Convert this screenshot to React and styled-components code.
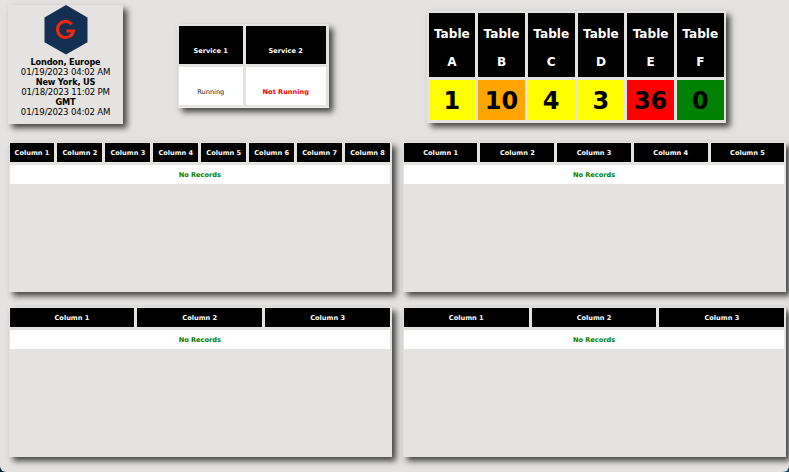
import React from "react";
import styled, { createGlobalStyle } from "styled-components";

const GlobalStyle = createGlobalStyle`
  * { box-sizing: border-box; }
  body {
    margin: 0;
    background: linear-gradient(90deg, #06202e 50%, #0b4a74 50%);
    font-family: Verdana, "DejaVu Sans", sans-serif;
    color: #000;
  }
`;

const Page = styled.main`
  width: 789px;
  height: 472px;
  overflow: hidden;
  background: #e4e3e1;
  border-radius: 0 0 6px 6px;
`;

const Panel = styled.section`
  background: #e4e3e1;
  box-shadow: 4px 4px 6px #444;
`;

const TopBar = styled.header`
  display: flex;
  align-items: flex-start;
  height: 142px;
  padding-left: 8px;
`;

const Clocks = styled(Panel)`
  width: 115px;
  height: 119px;
  margin-top: 5px;
  display: flex;
  flex-direction: column;
  align-items: center;
  font-size: 8.6px;
  line-height: 10px;
  white-space: nowrap;
`;

const Logo = styled.svg`
  width: 44px;
  height: 50px;
  margin-bottom: 2px;
`;

const City = styled.strong`
  font-size: 8.2px;
  letter-spacing: -0.18px;
`;

const Time = styled.span`
  letter-spacing: -0.2px;
`;

const Services = styled(Panel)`
  width: 151px;
  height: 84px;
  margin: 24px 0 0 54.5px;
  padding: 2px 2px 2px 1.5px;
  display: grid;
  grid-template-columns: 63.5px 80.5px;
  grid-template-rows: 38px 37.5px;
  gap: 3px;
  border-bottom: 1px solid #f3f3f2;
`;

const ServiceCell = styled.div`
  display: flex;
  align-items: center;
  justify-content: center;
  padding-top: 12px;
  font-size: 6.6px;
  font-weight: ${(p) => (p.$bold ? 700 : 400)};
  background: ${(p) => (p.$head ? "#000" : "#fff")};
  color: ${(p) => p.$color};
`;

const Counters = styled(Panel)`
  width: 299px;
  height: 112px;
  margin: 11px 0 0 98.5px;
  padding: 1.5px;
  display: grid;
  grid-template-columns: repeat(6, 46.7px);
  grid-template-rows: 64.5px 40px;
  gap: 3px;
`;

const CounterHead = styled.div`
  background: #000;
  color: #fff;
  display: flex;
  flex-direction: column;
  align-items: center;
  justify-content: center;
  padding-top: 8px;
  font-size: 12.1px;
  font-weight: 700;
  line-height: 27.4px;
`;

const CounterValue = styled.div`
  background: ${(p) => p.$fill};
  display: flex;
  align-items: center;
  justify-content: center;
  padding-top: 2px;
  font-size: 24px;
  font-weight: 700;
`;

const Grids = styled.div`
  display: grid;
  grid-template-columns: 383px 383px;
  grid-template-rows: 150px 149.4px;
  gap: 15.4px 11.3px;
  padding-left: 8.5px;
`;

const GridPanel = styled(Panel)`
  padding: 1px 1.5px 0 1px;
`;

const HeadRow = styled.div`
  display: grid;
  grid-template-columns: repeat(${(p) => p.$count}, 1fr);
  gap: 3px;
  height: 19px;
`;

const HeadCell = styled.div`
  height: 19px;
  background: #000;
  color: #fff;
  font-size: 6.6px;
  font-weight: 700;
  line-height: 21px;
  text-align: center;
  white-space: nowrap;
`;

const EmptyRow = styled.div`
  margin-top: 3px;
  height: 19px;
  background: #fff;
  color: green;
  font-size: 6.6px;
  font-weight: 700;
  line-height: 21px;
  text-align: center;
`;

const clocks = [
  ["London, Europe", "01/19/2023 04:02 AM"],
  ["New York, US", "01/18/2023 11:02 PM"],
  ["GMT", "01/19/2023 04:02 AM"],
];

const counters = [
  ["A", 1, "yellow"],
  ["B", 10, "orange"],
  ["C", 4, "yellow"],
  ["D", 3, "yellow"],
  ["E", 36, "red"],
  ["F", 0, "green"],
];

function RecordGrid({ count }) {
  return (
    <GridPanel>
      <HeadRow $count={count}>
        {Array.from({ length: count }, (_, i) => (
          <HeadCell key={i}>Column {i + 1}</HeadCell>
        ))}
      </HeadRow>
      <EmptyRow>No Records</EmptyRow>
    </GridPanel>
  );
}

export default function App() {
  return (
    <>
      <GlobalStyle />
      <Page>
        <TopBar>
          <Clocks>
            <Logo viewBox="0 0 44 50">
              <path d="M22 0 43.5 12.4V37.2L22 49.6.5 37.2V12.4Z" fill="#152f52" />
              <path
                d="M27.6 19.2A8 8 0 1 0 29.4 25.9H22.4"
                fill="none"
                stroke="#f4270c"
                strokeWidth="3"
              />
            </Logo>
            {clocks.map(([city, time]) => (
              <React.Fragment key={city}>
                <City>{city}</City>
                <Time>{time}</Time>
              </React.Fragment>
            ))}
          </Clocks>
          <Services>
            <ServiceCell $head $bold $color="#fff">Service 1</ServiceCell>
            <ServiceCell $head $bold $color="#fff">Service 2</ServiceCell>
            <ServiceCell $color="#222">Running</ServiceCell>
            <ServiceCell $bold $color="red">Not Running</ServiceCell>
          </Services>
          <Counters>
            {counters.map(([name]) => (
              <CounterHead key={name}>
                <span>Table</span>
                <span>{name}</span>
              </CounterHead>
            ))}
            {counters.map(([name, value, fill]) => (
              <CounterValue key={name} $fill={fill}>{value}</CounterValue>
            ))}
          </Counters>
        </TopBar>
        <Grids>
          <RecordGrid count={8} />
          <RecordGrid count={5} />
          <RecordGrid count={3} />
          <RecordGrid count={3} />
        </Grids>
      </Page>
    </>
  );
}
